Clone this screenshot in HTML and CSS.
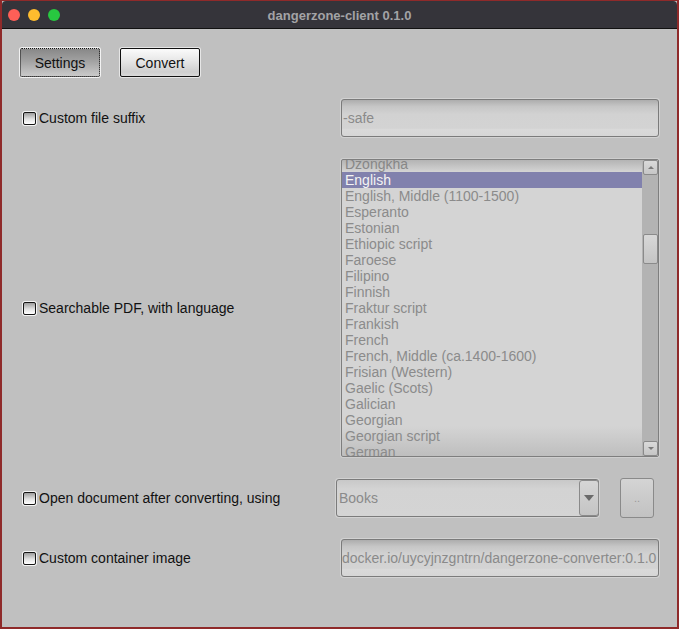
FILE: index.html
```html
<!DOCTYPE html>
<html>
<head>
<meta charset="utf-8">
<title>dangerzone-client 0.1.0</title>
<link rel="stylesheet" href="styles.css">
</head>
<body>
<div class="window">
  <div class="titlebar">
    <div class="lights">
      <span class="light red"></span>
      <span class="light yellow"></span>
      <span class="light green"></span>
    </div>
    <div class="title">dangerzone-client 0.1.0</div>
    <div></div>
  </div>
  <div class="content">
    <div class="tabs">
      <button class="btn pressed">Settings</button>
      <button class="btn">Convert</button>
    </div>
    <div class="form">
      <div class="row">
        <label class="check"><input type="checkbox" class="cb"><span>Custom file suffix</span></label>
        <div class="field"><div class="textbox">-safe</div></div>
      </div>
      <div class="row">
        <label class="check"><input type="checkbox" class="cb"><span>Searchable PDF, with language</span></label>
        <div class="field">
          <div class="listbox">
            <div class="items">
              <ul class="list">
                <li>Dzongkha</li>
                <li class="sel">English</li>
                <li>English, Middle (1100-1500)</li>
                <li>Esperanto</li>
                <li>Estonian</li>
                <li>Ethiopic script</li>
                <li>Faroese</li>
                <li>Filipino</li>
                <li>Finnish</li>
                <li>Fraktur script</li>
                <li>Frankish</li>
                <li>French</li>
                <li>French, Middle (ca.1400-1600)</li>
                <li>Frisian (Western)</li>
                <li>Gaelic (Scots)</li>
                <li>Galician</li>
                <li>Georgian</li>
                <li>Georgian script</li>
                <li>German</li>
              </ul>
            </div>
            <div class="scrollbar">
              <div class="sb-btn"><span class="tri-up"></span></div>
              <div class="track"><div class="thumb"></div></div>
              <div class="sb-btn"><span class="tri-down"></span></div>
            </div>
          </div>
        </div>
      </div>
      <div class="row">
        <label class="check"><input type="checkbox" class="cb"><span>Open document after converting, using</span></label>
        <div class="field combo-field">
          <div class="combo">
            <span class="combo-text">Books</span>
            <span class="combo-arrow"><span class="tri-down big"></span></span>
          </div>
          <button class="dots">..</button>
        </div>
      </div>
      <div class="row">
        <label class="check"><input type="checkbox" class="cb"><span>Custom container image</span></label>
        <div class="field"><div class="textbox nopad">docker.io/uycyjnzgntrn/dangerzone-converter:0.1.0</div></div>
      </div>
    </div>
  </div>
</div>
</body>
</html>
```

FILE: styles.css
```css
html, body {
  margin: 0;
  padding: 0;
  background: #8f2a2a;
}

body {
  font-family: "Liberation Sans", Arial, sans-serif;
  font-size: 14px;
  color: #111;
}

.window {
  width: 679px;
  height: 629px;
  box-sizing: border-box;
  border: 2px solid #8f2a2a;
  border-top-width: 1px;
  background: #c0c0c0;
  overflow: hidden;
}

.titlebar {
  height: 27px;
  background: #35343a;
  border-bottom: 1px solid #111;
  display: grid;
  grid-template-columns: 1fr auto 1fr;
  align-items: center;
  border-top-left-radius: 4px;
  border-top-right-radius: 4px;
}

.lights {
  display: flex;
  gap: 8px;
  padding-left: 6px;
}

.light {
  width: 12px;
  height: 12px;
  border-radius: 50%;
  display: block;
}
.light.red { background: #fe5f57; }
.light.yellow { background: #febc2e; }
.light.green { background: #28c840; }

.title {
  font-weight: bold;
  font-size: 13px;
  color: #a3a3a6;
  padding-top: 1px;
}

.content {
  padding: 19px 18px 0 18px;
}

.tabs {
  display: flex;
  gap: 20px;
}

.btn {
  width: 80px;
  height: 29px;
  box-sizing: border-box;
  font-family: "Liberation Sans", Arial, sans-serif;
  font-size: 14px;
  color: #111;
  border: 1px solid #111;
  border-radius: 2px;
  box-shadow: 0 0 0 1px #e6e6e6;
  background: linear-gradient(to bottom, #fbfbfb 0%, #e6e6e6 45%, #cfcfcf 85%, #dadada 100%);
  padding: 0;
  margin: 0;
}

.btn.pressed {
  border: 1px dotted #111;
  box-shadow: 0 0 0 1px #f2f2f2;
  background: linear-gradient(to bottom, #888888 0%, #a2a2a2 45%, #c0c0c0 85%, #cacaca 100%);
}

.form {
  margin-top: 22px;
  display: flex;
  flex-direction: column;
  gap: 22px;
}

.row {
  display: flex;
  align-items: center;
}

.check {
  width: 313px;
  padding-left: 3px;
  display: flex;
  align-items: center;
  gap: 3px;
  color: #111;
}

.cb {
  appearance: none;
  -webkit-appearance: none;
  margin: 0;
  width: 13px;
  height: 13px;
  box-sizing: border-box;
  border: 1px solid #161616;
  border-radius: 2px;
  box-shadow: 0 0 0 1px #f4f4f4;
  background: linear-gradient(to bottom, #9c9c9c 0%, #e2e2e2 55%, #ffffff 100%);
}

.field {
  flex: 1;
  display: flex;
}

.textbox {
  margin-left: 5px;
  flex: 1;
  height: 38px;
  box-sizing: border-box;
  border: 1px solid #7b7b7b;
  border-radius: 3px;
  box-shadow: 0 0 0 1px #d2d2d2;
  background: linear-gradient(to bottom, #adadad 0%, #c6c6c6 18%, #d2d2d2 40%, #d3d3d3 78%, #d9d9d9 82%, #d6d6d6 100%);
  color: #8a8a8a;
  display: flex;
  align-items: center;
  padding-left: 1px;
  white-space: nowrap;
  overflow: hidden;
}

.textbox.nopad {
  padding-left: 0;
}

.listbox {
  margin-left: 5px;
  flex: 1;
  height: 298px;
  box-sizing: border-box;
  border: 1px solid #7e7e7e;
  border-radius: 2px;
  box-shadow: 0 0 0 1px #cecece;
  display: flex;
  position: relative;
  background: #d4d4d4;
}

.listbox::before,
.listbox::after {
  content: "";
  position: absolute;
  left: 0;
  right: 16px;
  pointer-events: none;
}

.listbox::before {
  top: 0;
  height: 12px;
  background: linear-gradient(to bottom, rgba(120,120,120,0.35), rgba(120,120,120,0));
}

.listbox::after {
  bottom: 0;
  height: 30px;
  background: linear-gradient(to top, rgba(140,140,140,0.3), rgba(140,140,140,0));
}

.items {
  flex: 1;
  overflow: hidden;
}

.list {
  list-style: none;
  margin: -4px 0 0 0;
  padding: 0;
}

.list li {
  height: 16px;
  line-height: 16px;
  padding-left: 3px;
  color: #8b8b8b;
  white-space: nowrap;
}

.list li.sel {
  background: #8181ad;
  color: #f4f4f4;
}

.scrollbar {
  width: 16px;
  background: #b3b3b3;
  display: flex;
  flex-direction: column;
  padding-left: 1px;
  box-sizing: border-box;
}

.sb-btn {
  height: 15px;
  box-sizing: border-box;
  border: 1px solid #8a8a8a;
  border-radius: 2px;
  background: linear-gradient(to bottom, #dadada, #c6c6c6);
  display: flex;
  align-items: center;
  justify-content: center;
}

.track {
  flex: 1;
}

.thumb {
  margin-top: 59px;
  height: 30px;
  box-sizing: border-box;
  border: 1px solid #8a8a8a;
  border-radius: 2px;
  background: linear-gradient(to bottom, #d8d8d8, #c4c4c4);
}

.tri-up {
  width: 0;
  height: 0;
  border-left: 3px solid transparent;
  border-right: 3px solid transparent;
  border-bottom: 3px solid #7a7a7a;
}

.tri-down {
  width: 0;
  height: 0;
  border-left: 3px solid transparent;
  border-right: 3px solid transparent;
  border-top: 3px solid #7a7a7a;
}

.tri-down.big {
  border-left-width: 5px;
  border-right-width: 5px;
  border-top: 6px solid #6a6a6a;
}

.combo-field {
  align-items: center;
  gap: 21px;
}

.combo {
  width: 263px;
  height: 38px;
  box-sizing: border-box;
  border: 1px solid #7b7b7b;
  border-radius: 3px;
  box-shadow: 0 0 0 1px #d2d2d2;
  background: linear-gradient(to bottom, #c8c8c8 0%, #d3d3d3 25%, #d4d4d4 100%);
  display: flex;
  align-items: stretch;
}

.combo-text {
  flex: 1;
  color: #8a8a8a;
  display: flex;
  align-items: center;
  padding-left: 2px;
}

.combo-arrow {
  width: 20px;
  box-sizing: border-box;
  border: 1px solid #8a8a8a;
  border-radius: 3px;
  margin: 0 -1px 0 0;
  background: linear-gradient(to bottom, #d6d6d6, #c4c4c4);
  display: flex;
  align-items: center;
  justify-content: center;
}

.dots {
  width: 34px;
  height: 40px;
  margin: -1px 0;
  box-sizing: border-box;
  border: 1px solid #8a8a8a;
  border-radius: 3px;
  background: linear-gradient(to bottom, #d4d4d4, #c2c2c2);
  color: #9a9a9a;
  font-family: "Liberation Sans", Arial, sans-serif;
  font-size: 11px;
  padding: 0;
}
```
